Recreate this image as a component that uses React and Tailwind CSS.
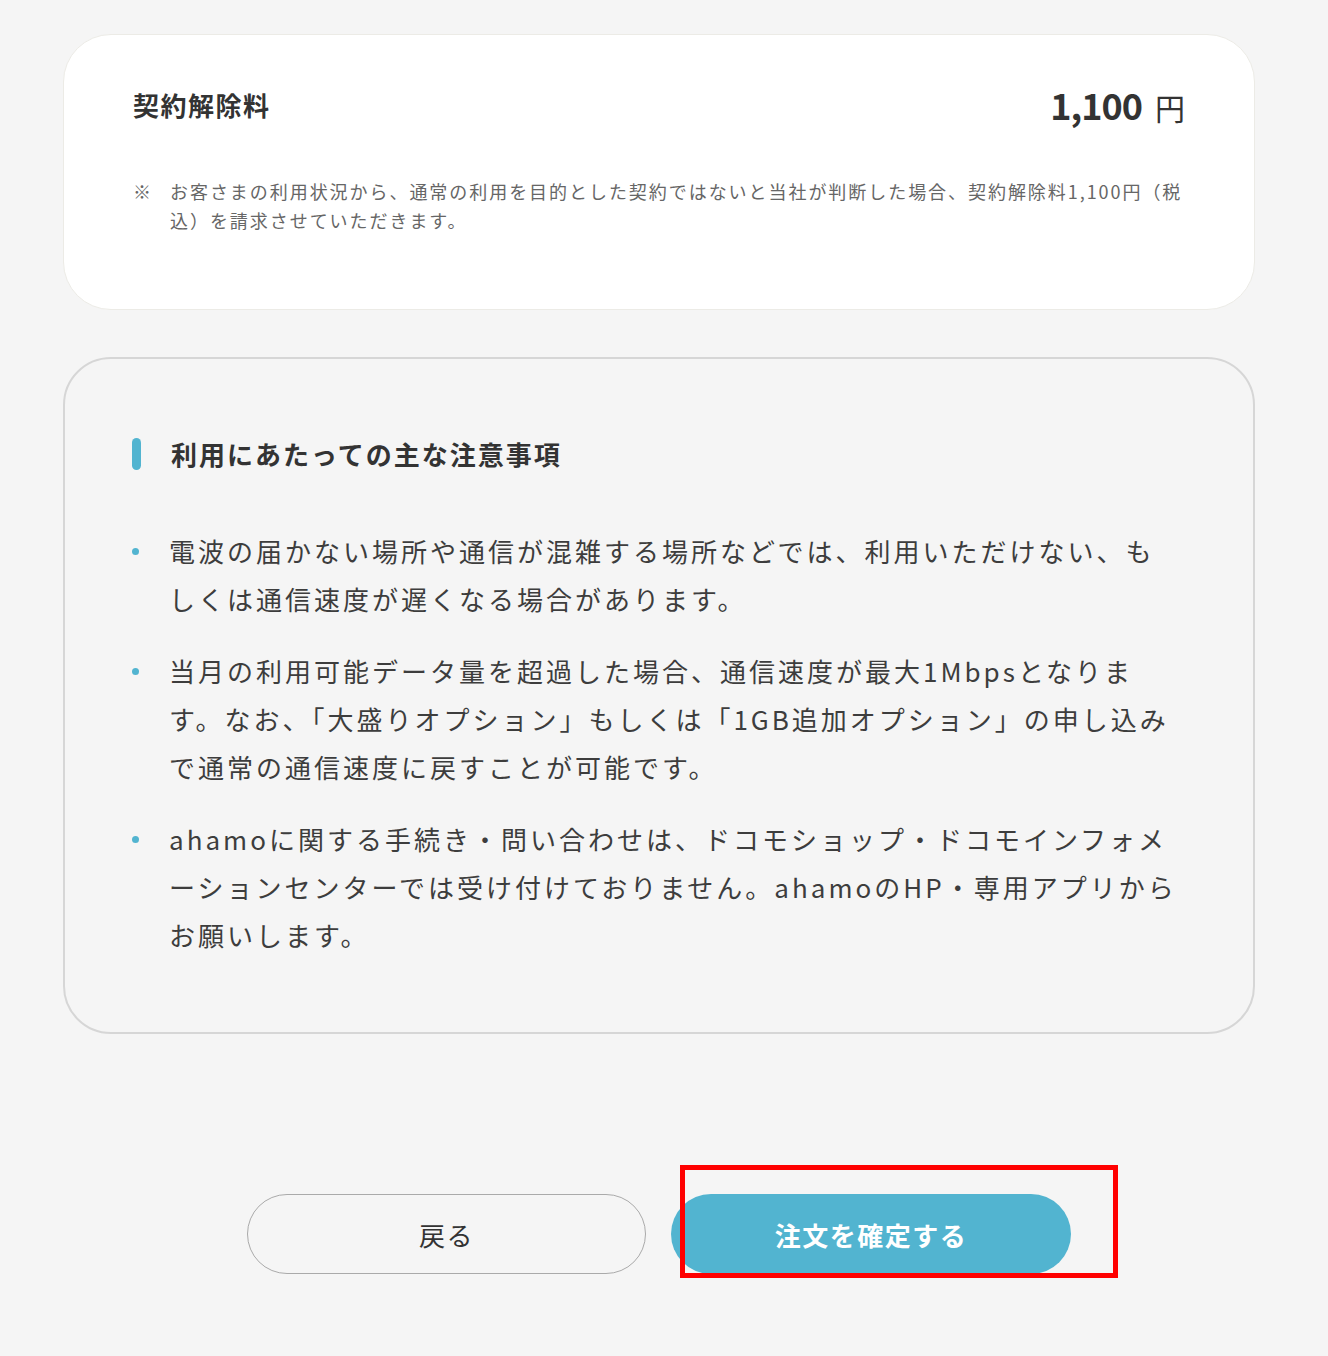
const font = { fontFamily: '"Noto Sans CJK JP", "Noto Sans", sans-serif' };

const notes = [
  '電波の届かない場所や通信が混雑する場所などでは、利用いただけない、もしくは通信速度が遅くなる場合があります。',
  '当月の利用可能データ量を超過した場合、通信速度が最大1Mbpsとなります。なお、「大盛りオプション」もしくは「1GB追加オプション」の申し込みで通常の通信速度に戻すことが可能です。',
  'ahamoに関する手続き・問い合わせは、ドコモショップ・ドコモインフォメーションセンターでは受け付けておりません。ahamoのHP・専用アプリからお願いします。',
];

export default function App() {
  return (
    <div className="min-h-[1356px] bg-[#f5f5f5] px-[63px] pt-[34px] pb-[82px] text-[#333]" style={font}>
      <div className="w-[1192px]">
        {/* fee card */}
        <div className="rounded-[48px] border border-[#ecebe6] bg-white pl-[69px] pr-[69px] pt-[47px] pb-[74px]">
          <div className="flex h-[46px] items-center justify-between">
            <div className="text-[26px] font-bold leading-[36px] tracking-[1.5px] text-[#333]">契約解除料</div>
            <div className="flex items-baseline gap-[13px] text-[#333]">
              <span className="text-[36px] font-semibold leading-[46px] tracking-[-1px]">1,100</span>
              <span className="text-[30px] leading-[46px]">円</span>
            </div>
          </div>
          <div className="mt-[49px] flex text-[18px] leading-[29px] tracking-[1.95px] text-[#666]">
            <span className="w-[37px] shrink-0">※</span>
            <p>お客さまの利用状況から、通常の利用を目的とした契約ではないと当社が判断した場合、契約解除料1,100円（税込）を請求させていただきます。</p>
          </div>
        </div>

        {/* notes card */}
        <div className="mt-[47px] rounded-[48px] border-2 border-[#d6d6d6] pl-[67px] pr-[60px] pt-[77px] pb-[73px]">
          <div className="flex items-center gap-[30px]">
            <span className="h-[32px] w-[9px] rounded-full bg-[#52b4d0]"></span>
            <h2 className="text-[26px] font-bold leading-[36px] tracking-[2px] text-[#333]">利用にあたっての主な注意事項</h2>
          </div>
          <ul className="mt-[55px] flex flex-col gap-[24px]">
            {notes.map((t, i) => (
              <li key={i} className="flex">
                <span className="flex h-[48px] w-[37px] shrink-0 items-center">
                  <span className="h-[7px] w-[7px] rounded-full bg-[#52b4d0]"></span>
                </span>
                <p className="w-[1012px] text-[26px] leading-[48px] tracking-[3px] text-[#3d3d3d]">{t}</p>
              </li>
            ))}
          </ul>
        </div>

        {/* buttons */}
        <div className="mt-[160px] flex justify-center gap-[25px]">
          <button className="h-[80px] w-[399px] rounded-full border border-[#aaaaaa] text-[26px] tracking-[1.5px] text-[#333]">
            戻る
          </button>
          <div className="relative">
            <button className="h-[80px] w-[400px] rounded-full bg-[#52b4d0] text-[26px] font-bold tracking-[1.5px] text-white">
              注文を確定する
            </button>
            <div className="pointer-events-none absolute left-[9px] top-[-29px] h-[113px] w-[438px] border-[5px] border-[#ff0000]"></div>
          </div>
        </div>
      </div>
    </div>
  );
}
